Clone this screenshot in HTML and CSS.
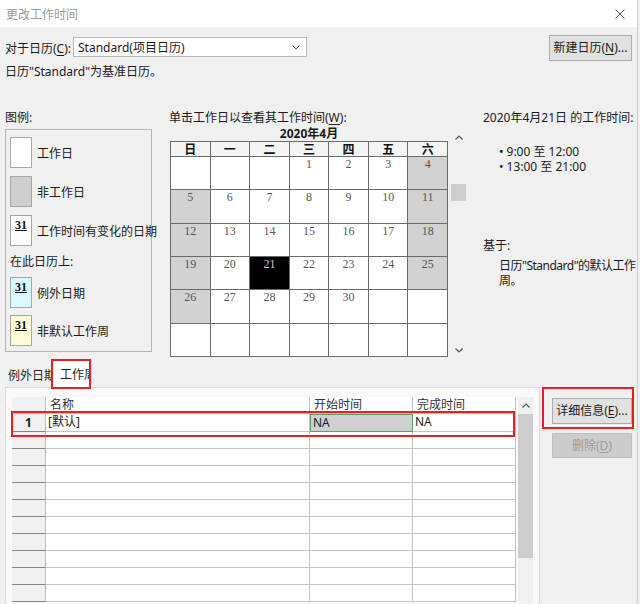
FILE: index.html
```html
<!DOCTYPE html>
<html lang="zh-CN">
<head>
  <meta charset="UTF-8" />
  <title>更改工作时间</title>
  <link rel="stylesheet" href="styles.css">
</head>
<body>
<div class="window">

  <div class="titlebar">
    <span>更改工作时间</span>
    <svg class="close" width="10" height="10" viewBox="0 0 10 10"><path d="M0.5 0.5L9.5 9.5M9.5 0.5L0.5 9.5" stroke="#555" stroke-width="1" fill="none"/></svg>
  </div>

  <div class="picker-row">
    <label class="picker-label">对于日历(<u>C</u>):</label>
    <div class="select">
      <span>Standard(项目日历)</span>
      <svg width="8" height="5" viewBox="0 0 8 5"><path d="M0.5 0.5L4 4L7.5 0.5" stroke="#666" stroke-width="1" fill="none"/></svg>
    </div>
    <button class="btn new-cal">新建日历(<u>N</u>)...</button>
  </div>
  <p class="note">日历"Standard"为基准日历。</p>

  <div class="main">
    <div class="legend">
      <div class="legend-title">图例:</div>
      <div class="legend-box">
        <div class="legend-item"><div class="swatch"></div>工作日</div>
        <div class="legend-item"><div class="swatch gray"></div>非工作日</div>
        <div class="legend-item"><div class="swatch"><span>31</span></div>工作时间有变化的日期</div>
        <div class="legend-sub">在此日历上:</div>
        <div class="legend-item tight"><div class="swatch cyan"><span>31</span></div>例外日期</div>
        <div class="legend-item tight"><div class="swatch yellow"><span>31</span></div>非默认工作周</div>
      </div>
    </div>

    <div class="cal-col">
      <div class="cal-label">单击工作日以查看其工作时间(<u>W</u>):</div>
      <div class="cal-body">
        <div class="month">
          <div class="month-title">2020年4月</div>
          <div class="grid">
            <div class="hd">日</div><div class="hd">一</div><div class="hd">二</div><div class="hd">三</div><div class="hd">四</div><div class="hd">五</div><div class="hd">六</div>

            <div class="day"></div><div class="day"></div><div class="day"></div><div class="day">1</div><div class="day">2</div><div class="day">3</div><div class="day off">4</div>
            <div class="day off">5</div><div class="day">6</div><div class="day">7</div><div class="day">8</div><div class="day">9</div><div class="day">10</div><div class="day off">11</div>
            <div class="day off">12</div><div class="day">13</div><div class="day">14</div><div class="day">15</div><div class="day">16</div><div class="day">17</div><div class="day off">18</div>
            <div class="day off">19</div><div class="day">20</div><div class="day sel">21</div><div class="day">22</div><div class="day">23</div><div class="day">24</div><div class="day off">25</div>
            <div class="day off">26</div><div class="day">27</div><div class="day">28</div><div class="day">29</div><div class="day">30</div><div class="day"></div><div class="day"></div>
            <div class="day"></div><div class="day"></div><div class="day"></div><div class="day"></div><div class="day"></div><div class="day"></div><div class="day"></div>
          </div>
        </div>
        <div class="cal-scroll">
          <div class="arrow"><svg width="8" height="5" viewBox="0 0 8 5"><path d="M0.5 4.5L4 1L7.5 4.5" stroke="#555" stroke-width="1.2" fill="none"/></svg></div>
          <div class="thumb"></div>
          <div class="spacer"></div>
          <div class="arrow"><svg width="8" height="5" viewBox="0 0 8 5"><path d="M0.5 0.5L4 4L7.5 0.5" stroke="#555" stroke-width="1.2" fill="none"/></svg></div>
        </div>
      </div>
    </div>

    <div class="info">
      <div class="info-title">2020年4月21日 的工作时间:</div>
      <ul class="hours">
        <li><span class="dot">•</span>9:00 至 12:00</li>
        <li><span class="dot">•</span>13:00 至 21:00</li>
      </ul>
      <div class="based">基于:</div>
      <p class="based-text">日历"Standard"的默认工作<br>周。</p>
    </div>
  </div>

  <div class="bottom">
    <div class="left">
      <div class="tabs">
        <div class="tab">例外日期</div>
        <div class="tab active">工作周</div>
      </div>
      <div class="panel">
        <div class="sheet">
          <div class="row head">
            <div class="rh"></div>
            <div class="c name">名称</div>
            <div class="c start">开始时间</div>
            <div class="c end">完成时间</div>
          </div>
          <div class="row first">
            <div class="rh">1</div>
            <div class="c name">[默认]</div>
            <div class="c start na">NA</div>
            <div class="c end">NA</div>
          </div>
          <div class="row"><div class="rh"></div><div class="c name"></div><div class="c start"></div><div class="c end"></div></div>
          <div class="row"><div class="rh"></div><div class="c name"></div><div class="c start"></div><div class="c end"></div></div>
          <div class="row"><div class="rh"></div><div class="c name"></div><div class="c start"></div><div class="c end"></div></div>
          <div class="row"><div class="rh"></div><div class="c name"></div><div class="c start"></div><div class="c end"></div></div>
          <div class="row"><div class="rh"></div><div class="c name"></div><div class="c start"></div><div class="c end"></div></div>
          <div class="row"><div class="rh"></div><div class="c name"></div><div class="c start"></div><div class="c end"></div></div>
          <div class="row"><div class="rh"></div><div class="c name"></div><div class="c start"></div><div class="c end"></div></div>
          <div class="row"><div class="rh"></div><div class="c name"></div><div class="c start"></div><div class="c end"></div></div>
          <div class="row"><div class="rh"></div><div class="c name"></div><div class="c start"></div><div class="c end"></div></div>
          <div class="row"><div class="rh"></div><div class="c name"></div><div class="c start"></div><div class="c end"></div></div>
          <div class="row-mark"></div>
        </div>
        <div class="sheet-scroll">
          <div class="arrow"><svg width="8" height="5" viewBox="0 0 8 5"><path d="M0.5 4.5L4 1L7.5 4.5" stroke="#555" stroke-width="1.2" fill="none"/></svg></div>
          <div class="thumb"></div>
        </div>
      </div>
    </div>
    <div class="side">
      <div class="mark-box">
        <button class="btn detail">详细信息(<u>E</u>)...</button>
      </div>
      <button class="btn disabled">删除(<u>D</u>)</button>
    </div>
  </div>

</div>
</body>
</html>
```

FILE: styles.css
```css
* {
  box-sizing: border-box;
}

body {
  margin: 0;
  background: #f0f0f0;
  font-family: "Noto Sans", "Noto Sans CJK SC", sans-serif;
  font-size: 12px;
  color: #1a1a1a;
  overflow: hidden;
}

u {
  text-decoration-thickness: 1px;
  text-underline-offset: 2px;
}

.window {
  width: 638px;
  height: 604px;
  border-right: 1px solid #cdcdcd;
  overflow: hidden;
}

/* title bar */
.titlebar {
  height: 27px;
  background: #fff;
  display: flex;
  align-items: center;
  justify-content: space-between;
  padding: 0 12px 0 6px;
  color: #9a9a9a;
}

/* calendar picker */
.picker-row {
  display: flex;
  align-items: center;
  height: 26px;
  margin-top: 8px;
  padding: 0 5px;
}

.picker-label {
  width: 68px;
  white-space: nowrap;
}

.select {
  width: 234px;
  height: 20px;
  margin-top: -2px;
  background: #fff;
  border: 1px solid #b9b9b9;
  display: flex;
  align-items: center;
  justify-content: space-between;
  padding: 0 6px 0 4px;
}

.btn {
  font-family: inherit;
  font-size: 12px;
  line-height: 16px;
  color: #1a1a1a;
  background: #e1e1e1;
  border: 1px solid #adadad;
  padding: 0;
  height: 26px;
  width: 80px;
}

.new-cal {
  margin-left: auto;
  width: 83px;
}

.note {
  margin: 3px 0 0 5px;
  line-height: 16px;
}

/* middle section */
.main {
  display: flex;
  height: 249px;
  margin-top: 30px;
  padding-left: 5px;
}

.legend {
  width: 147px;
  flex: none;
}

.legend-title,
.cal-label,
.info-title,
.based {
  line-height: 16px;
}

.legend-box {
  margin-top: 3px;
  height: 223px;
  border: 1px solid #b4b4b4;
  padding: 7px 4px;
}

.legend-item {
  display: flex;
  align-items: center;
  gap: 5px;
  height: 31px;
  margin-bottom: 8px;
  white-space: nowrap;
}

.legend-item.tight {
  margin-bottom: 7px;
}

.legend-sub {
  line-height: 16px;
  margin: 0 0 7px;
}

.swatch {
  width: 22px;
  height: 31px;
  flex: none;
  background: #fff;
  border: 1px solid #a6a6a6;
  text-align: center;
  align-self: flex-start;
}

.swatch span {
  font-family: "Liberation Serif", serif;
  font-weight: bold;
  font-size: 12px;
  line-height: 13px;
  text-decoration: underline;
  color: #111;
}

.swatch.gray { background: #cfcfcf; }
.swatch.cyan { background: #d6fafe; }
.swatch.yellow { background: #fdfdd8; }

.cal-col {
  width: 296px;
  flex: none;
  margin-left: 18px;
}

.cal-label {
  margin-left: -1px;
  white-space: nowrap;
}

.cal-body {
  display: flex;
  align-items: flex-start;
}

.month {
  width: 278px;
}

.month-title {
  text-align: center;
  font-weight: bold;
  line-height: 14px;
  margin-top: 1px;
}

.grid {
  display: grid;
  grid-template-columns: repeat(7, 1fr);
  grid-template-rows: 14px repeat(6, 1fr);
  gap: 1px;
  padding: 1px;
  height: 216px;
  background: #6a6a6a;
}

.hd {
  background: #f4f4f4;
  text-align: center;
  font-family: "Noto Sans CJK SC", serif;
  font-weight: bold;
  font-size: 12px;
  line-height: 14px;
  color: #111;
}

.day {
  background: #fff;
  text-align: center;
  font-family: "Liberation Serif", serif;
  font-size: 12px;
  line-height: 14px;
  color: #555;
}

.day.off { background: #d2d2d2; }
.day.sel { background: #000; color: #ccc; }

.cal-scroll {
  width: 15px;
  height: 230px;
  margin: 3px 0 0 3px;
  display: flex;
  flex-direction: column;
}

.arrow {
  height: 17px;
  display: flex;
  align-items: center;
  justify-content: center;
}

.cal-scroll .thumb {
  height: 17px;
  margin-top: 38px;
  background: #cdcdcd;
}

.spacer {
  flex: 1;
}

.info {
  margin-left: 17px;
  white-space: nowrap;
}

.hours {
  list-style: none;
  margin: 18px 0 0 16px;
  padding: 0;
  line-height: 15px;
}

.dot {
  margin-right: 3px;
}

.based {
  margin-top: 64px;
}

.based-text {
  margin: 4px 0 0 16px;
  line-height: 15px;
  letter-spacing: -0.5px;
}

/* bottom section */
.bottom {
  display: flex;
}

.left {
  width: 540px;
  padding-left: 5px;
}

.tabs {
  display: flex;
  align-items: flex-end;
  height: 28px;
}

.tab {
  width: 46px;
  height: 23px;
  line-height: 23px;
  padding-left: 3px;
  overflow: hidden;
  white-space: nowrap;
  color: #222;
}

.tab.active {
  width: 40px;
  height: 30px;
  padding: 2px 0 0 7px;
  background: #fff;
  border: 2px solid #e3211f;
  margin-bottom: -2px;
  position: relative;
  z-index: 1;
}

.panel {
  height: 230px;
  background: #f9f9f9;
  border: 1px solid #d9d9d9;
  padding: 9px 0 0 6px;
  display: flex;
  align-items: flex-start;
}

.sheet {
  position: relative;
  width: 504px;
}

.row {
  display: flex;
  height: 17px;
}

.row.first {
  height: 18px;
}

.rh {
  width: 34px;
  background: #f0f0f0;
  border-right: 1px solid #bdbdbd;
  border-bottom: 1px solid #858585;
  text-align: center;
  font-weight: bold;
  line-height: 17px;
}

.c {
  background: #fff;
  border-right: 1px solid #c3c3c3;
  border-bottom: 1px solid #c3c3c3;
  line-height: 16px;
  padding-left: 2px;
  white-space: nowrap;
}

.head .c {
  padding-left: 4px;
  color: #333;
}

.head .rh {
  border-bottom-color: #bdbdbd;
}

.name { width: 264px; }
.start { width: 103px; }
.end { width: 103px; }

.c.na {
  background: #d0d0d0;
  border: 1px solid #5f9e5f;
}

.row-mark {
  position: absolute;
  left: -1px;
  top: 14px;
  width: 504px;
  height: 26px;
  border: 2px solid #e3211f;
}

.sheet-scroll {
  width: 15px;
  height: 230px;
  margin-left: 2px;
  background: #f0f0f0;
}

.sheet-scroll .thumb {
  height: 144px;
  background: #cdcdcd;
}

.side {
  width: 97px;
}

.mark-box {
  width: 92px;
  height: 42px;
  margin: 28px 0 0 2px;
  border: 2px solid #e3211f;
  padding: 9px 0 0 8px;
}

.btn.disabled {
  margin: 4px 0 0 12px;
  height: 25px;
  background: #cccccc;
  border-color: #bfbfbf;
  color: #9c9c9c;
}
```
